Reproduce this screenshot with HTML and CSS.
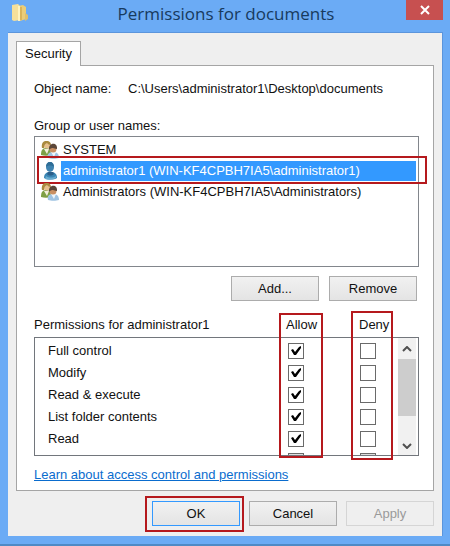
FILE: index.html
```
<!DOCTYPE html>
<html lang="en">
<head>
    <meta charset="UTF-8">
    <meta name="viewport" content="width=device-width, initial-scale=1.0">
    <title>Permissions for documents</title>
    <link rel="stylesheet" href="styles.css">
</head>
<body>
    <svg class="defs" aria-hidden="true">
        <defs>
            <symbol id="icon-group" viewBox="0 0 18 18">
                <path d="M0 14c0-4 1-7 5-7s5 3 5 7c-3 1-7 1-10 0z" fill="#7d9f45"/>
                <path d="M3 8h5l-2 5z" fill="#f3f0dc"/>
                <circle cx="6" cy="4" r="3.5" fill="#e6c08e"/>
                <path d="M1 7c-2-9 9-9 9-3-2 0-3-1-4-2-2 1-3 2-3 5z" fill="#a98a3f"/>
                <path d="M7 17c-1-4 1-6 5-6s6 2 6 6c-3 1-8 1-11 0z" fill="#9fc3e2"/>
                <path d="M10 11h5l-2 5z" fill="#eef5fb"/>
                <circle cx="12" cy="8" r="3.5" fill="#c98f62"/>
                <path d="M8 9c-1-8 9-8 8-1-2 0-3-1-4-1s-2 0-4 2z" fill="#5b4638"/>
            </symbol>
            <symbol id="icon-user" viewBox="0 0 18 18">
                <path d="M3 16c0-4 2-5 4-6h5c2 1 4 2 4 6-3 2-10 2-13 0z" fill="#3a86b4"/>
                <path d="M7 10h5l1 2c-2 2-5 2-7 0z" fill="#2c5f8a"/>
                <path d="M5 14c3 2 7 2 10 0v2c-3 2-8 2-11 1z" fill="#69acd0"/>
                <ellipse cx="9" cy="5" rx="4" ry="5" fill="#3f83b0"/>
                <path d="M5 5c0-7 8-7 8 0-2-2-6-2-8 0z" fill="#2f6d96"/>
            </symbol>
        </defs>
    </svg>

    <div class="window">
        <header class="titlebar">
            <svg class="folder" viewBox="0 0 16 18">
                <path d="M0 1l6-1 2 2v14l-6 1-2-1z" fill="#f6e09a"/>
                <path d="M6 2l5-1 3 2v12l-6 2z" fill="#ebcd78"/>
                <path d="M7 2v15" stroke="#fff3bf" stroke-width="2"/>
                <path d="M9 3v13" stroke="#c99b3c"/>
                <path d="M13 9l3 2v4l-3 2z" fill="#dfbf6c"/>
            </svg>
            <h1>Permissions for documents</h1>
            <button type="button" class="close" aria-label="Close">
                <svg viewBox="0 0 10 10"><path d="M1 1l8 8M9 1l-8 8" stroke="#fff" stroke-width="2"/></svg>
            </button>
        </header>

        <main class="client">
            <div class="tabs">
                <button type="button" class="tab">Security</button>
            </div>
            <section class="panel">
                <p class="object"><span>Object name:</span><span>C:\Users\administrator1\Desktop\documents</span></p>

                <p class="label">Group or user names:</p>
                <ul class="users">
                    <li><svg><use href="#icon-group"/></svg><span>SYSTEM</span></li>
                    <li class="selected"><svg><use href="#icon-user"/></svg><span>administrator1 (WIN-KF4CPBH7IA5\administrator1)</span></li>
                    <li><svg><use href="#icon-group"/></svg><span>Administrators (WIN-KF4CPBH7IA5\Administrators)</span></li>
                </ul>

                <div class="actions">
                    <button type="button" class="btn">Add...</button>
                    <button type="button" class="btn">Remove</button>
                </div>

                <div class="permissions">
                    <div class="head">
                        <span>Permissions for administrator1</span>
                        <span>Allow</span>
                        <span>Deny</span>
                    </div>
                    <div class="box">
                        <table>
                            <tr><th>Full control</th><td><input type="checkbox" aria-label="Allow full control" checked></td><td><input type="checkbox" aria-label="Deny full control"></td></tr>
                            <tr><th>Modify</th><td><input type="checkbox" aria-label="Allow modify" checked></td><td><input type="checkbox" aria-label="Deny modify"></td></tr>
                            <tr><th>Read &amp; execute</th><td><input type="checkbox" aria-label="Allow read and execute" checked></td><td><input type="checkbox" aria-label="Deny read and execute"></td></tr>
                            <tr><th>List folder contents</th><td><input type="checkbox" aria-label="Allow list folder contents" checked></td><td><input type="checkbox" aria-label="Deny list folder contents"></td></tr>
                            <tr><th>Read</th><td><input type="checkbox" aria-label="Allow read" checked></td><td><input type="checkbox" aria-label="Deny read"></td></tr>
                            <tr><th></th><td><input type="checkbox" aria-label="Allow special permissions" disabled></td><td><input type="checkbox" aria-label="Deny special permissions" disabled></td></tr>
                        </table>
                        <div class="scrollbar">
                            <svg viewBox="0 0 10 6"><path d="M1 5l4-4 4 4"/></svg>
                            <div class="thumb"></div>
                            <svg viewBox="0 0 10 6"><path d="M1 1l4 4 4-4"/></svg>
                        </div>
                    </div>
                    <div class="mark mark-allow"></div>
                    <div class="mark mark-deny"></div>
                </div>

                <a href="#" class="learn">Learn about access control and permissions</a>
            </section>

            <footer class="footer">
                <button type="button" class="btn ok">OK</button>
                <button type="button" class="btn">Cancel</button>
                <button type="button" class="btn" disabled>Apply</button>
            </footer>
        </main>
    </div>
</body>
</html>
```
FILE: styles.css
```
* {
    box-sizing: border-box;
}
body {
    margin: 0;
    background-color: #4f8ac6;
    color: #111;
    font-family: "Liberation Sans", Arial, sans-serif;
    font-size: 13px;
    line-height: 20px;
}
p, ul, h1 {
    margin: 0;
    padding: 0;
}
button {
    font: inherit;
    color: inherit;
    padding: 0;
}
.defs {
    display: none;
}
.window {
    background-color: #6babf5;
    padding: 0 7px 8px 8px;
}
.titlebar {
    display: flex;
    align-items: flex-start;
    height: 32px;
}
.folder {
    width: 16px;
    height: 18px;
    margin: 4px 0 0 4px;
}
h1 {
    flex: 1;
    padding: 1px 0 0 18px;
    color: #173a5e;
    font-family: "Open Sans", "Noto Sans", sans-serif;
    font-size: 17px;
    font-weight: 400;
    line-height: 26px;
    text-align: center;
}
.close {
    display: flex;
    align-items: center;
    justify-content: center;
    width: 37px;
    height: 20px;
    border: none;
    background-color: #c75050;
}
.close svg {
    width: 10px;
    height: 10px;
}
.client {
    padding: 8px 8px 10px;
    border: 1px solid #5b95dc;
    border-width: 1px 1px 0 0;
    background-color: #efefef;
}
.tabs {
    display: flex;
    height: 24px;
}
.tab {
    position: relative;
    width: 65px;
    height: 25px;
    border: 1px solid #a5a5a5;
    border-bottom: none;
    background-color: #fff;
}
.panel {
    padding: 13px 14px 5px 17px;
    border: 1px solid #a5a5a5;
    background-color: #fff;
}
.object {
    display: flex;
}
.object span:first-child {
    width: 94px;
}
.label {
    margin-top: 17px;
}
.users {
    height: 131px;
    padding: 2px 2px 0;
    border: 1px solid #82868c;
    list-style: none;
}
.users li {
    position: relative;
    display: flex;
    align-items: center;
    height: 21px;
    padding-left: 4px;
}
.users svg {
    width: 18px;
    height: 18px;
    margin-right: 2px;
}
.users span {
    flex: 1;
    padding-left: 2px;
}
.selected span {
    background-color: #3399ff;
    color: #fff;
}
.selected::after {
    content: "";
    position: absolute;
    inset: -4px -11px -3px 0;
    border: 2px solid #b5191d;
}
.actions {
    display: flex;
    justify-content: flex-end;
    gap: 10px;
    margin: 9px 2px 14px 0;
}
.btn {
    width: 88px;
    height: 25px;
    border: 1px solid #acacac;
    background: linear-gradient(#f1f1f1, #e4e4e4);
}
.btn:disabled {
    border-color: #d5d5d5;
    background: #efefef;
    color: #9a9a9a;
}
.permissions {
    position: relative;
}
.head {
    display: grid;
    grid-template-columns: 1fr 73px 60px;
    height: 22px;
}
.box {
    display: flex;
    height: 119px;
    padding-right: 2px;
    border: 1px solid #72767c;
    overflow: hidden;
}
table {
    display: block;
    flex: 1;
    padding-left: 13px;
}
tbody {
    display: block;
}
.box tr {
    display: grid;
    grid-template-columns: 1fr 72px 38px;
    height: 22px;
    padding-top: 3px;
}
th, td {
    padding: 0;
    font-weight: 400;
    text-align: left;
}
input {
    appearance: none;
    display: block;
    width: 16px;
    height: 16px;
    margin: 2px 0 0;
    border: 1px solid #6a6a6a;
    background-color: #fff;
}
input:checked::after {
    content: "";
    display: block;
    width: 14px;
    height: 14px;
    background-color: #000;
    clip-path: polygon(2px 6px, 4px 5px, 6px 8px, 10px 3px, 12px 2px, 12px 4px, 7px 11px, 5px 11px);
}
input:disabled {
    background-color: #ddd;
}
.scrollbar {
    display: flex;
    flex-direction: column;
    align-items: center;
    width: 18px;
    padding: 8px 0 6px;
    background-color: #f1f1f1;
}
.scrollbar svg {
    width: 10px;
    height: 6px;
    fill: none;
    stroke: #505050;
    stroke-width: 2;
}
.thumb {
    width: 18px;
    height: 57px;
    margin: 7px 0 auto;
    background-color: #cdcdcd;
}
.mark {
    position: absolute;
    border: 2px solid #b5191d;
}
.mark-allow {
    top: -2px;
    right: 96px;
    bottom: -2px;
    width: 44px;
}
.mark-deny {
    top: -4px;
    right: 26px;
    bottom: -4px;
    width: 42px;
}
.learn {
    display: block;
    margin-top: 9px;
    color: #0a6cce;
}
.footer {
    display: flex;
    justify-content: flex-end;
    gap: 9px;
    padding-top: 10px;
}
.ok {
    position: relative;
    border-color: #3399ff;
}
.ok::after {
    content: "";
    position: absolute;
    inset: -6px -5px -7px -8px;
    border: 2px solid #b5191d;
}
```
